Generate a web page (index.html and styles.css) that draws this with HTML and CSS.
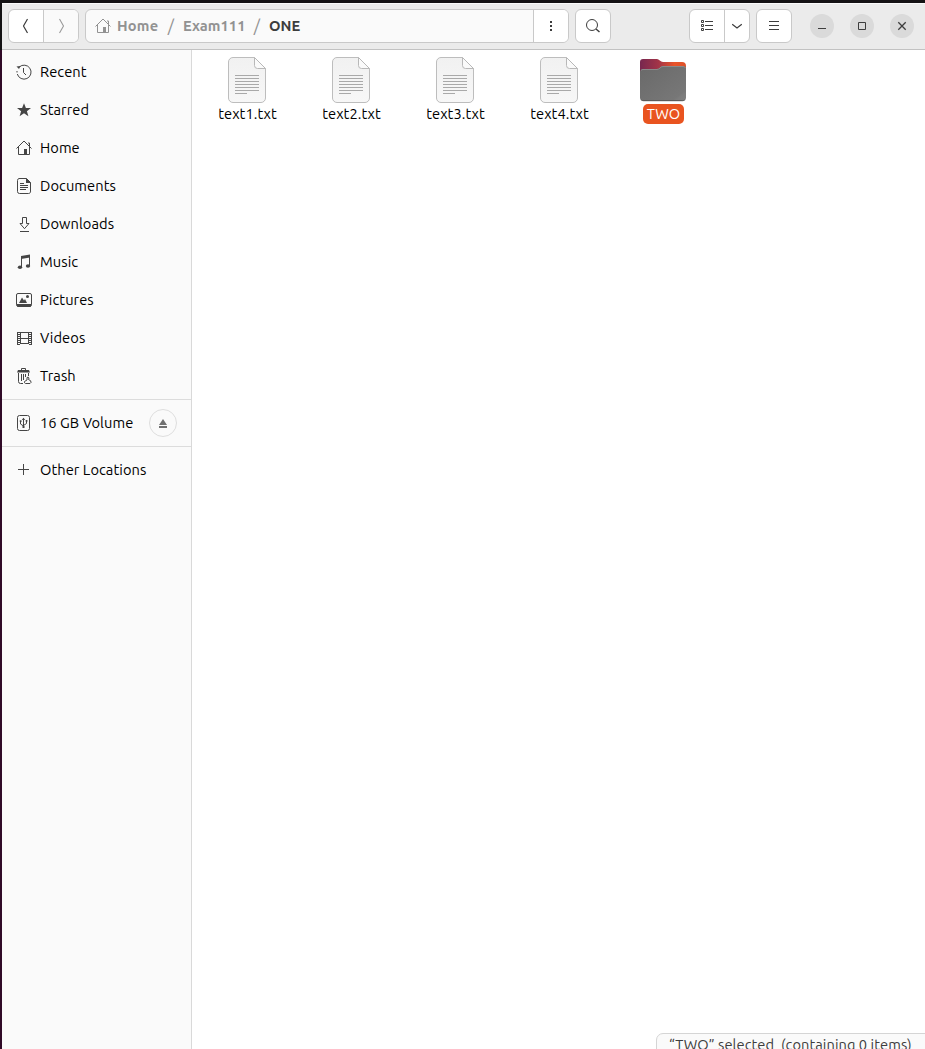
FILE: index.html
```html
<!DOCTYPE html>
<html lang="en">
<head>
<meta charset="utf-8">
<title>ONE</title>
<link rel="stylesheet" href="styles.css">
</head>
<body>
<svg class="defs" width="0" height="0">
  <defs>
    <linearGradient id="paper" x1="0" y1="0" x2="0" y2="1"><stop offset="0" stop-color="#f1f1f1"/><stop offset="1" stop-color="#f7f7f7"/></linearGradient>
    <linearGradient id="tab" x1="0" y1="0" x2="1" y2="0"><stop offset="0" stop-color="#77274f"/><stop offset=".4" stop-color="#a23448"/><stop offset=".75" stop-color="#e95429"/><stop offset="1" stop-color="#dc5129"/></linearGradient>
    <linearGradient id="front" x1="0" y1="0" x2="1" y2="1"><stop offset="0" stop-color="#696969"/><stop offset=".84" stop-color="#777"/><stop offset=".88" stop-color="#7c7c7c"/><stop offset="1" stop-color="#808080"/></linearGradient>
    <symbol id="home" viewBox="0 0 16 16"><path d="M.5 8.500 8 1l7.500 7.500M2.500 7v7.500h6M13.500 7v7.500H11M13.500 6V3H12" fill="none" stroke="currentColor"/><path d="M8 9h3v6H8z" fill="currentColor"/></symbol>
    <symbol id="file" viewBox="0 0 48 48"><path d="M10 1.500H31.500L42.500 12.500V42a4.500 4.500 0 0 1-4.500 4.500H10A4.500 4.500 0 0 1 5.500 42V6A4.500 4.500 0 0 1 10 1.500z" fill="url(#paper)" stroke="#bdbdbd"/><path d="M31.500 1.500v8a3 3 0 0 0 3 3h8z" fill="#fafafa" stroke="#b8b8b8"/><path d="M12 19.500h24M12 22.500h24M12 25.500h24M12 28.500h24M12 31.500h24M12 34.500h24M12 37.500h12" stroke="#a9a9a9"/></symbol>
  </defs>
</svg>
<div class="window">
  <header class="bar">
    <div class="group nav">
      <span class="btn"><svg width="16" height="16"><path d="M9.500 1 5.500 8l4 7" fill="none" stroke="#3d3d3d" stroke-width="1.200"/></svg></span>
      <span class="btn off"><svg width="16" height="16"><path d="M6.500 1l4 7-4 7" fill="none" stroke="#9a9a9a" stroke-width="1.100"/></svg></span>
    </div>
    <div class="group path">
      <div class="crumbs">
        <svg class="crumb-icon" width="16" height="16"><use href="#home"/></svg>
        <b class="c-home">Home</b><i>/</i><b class="c-exam">Exam111</b><i>/</i><b class="current">ONE</b>
      </div>
      <span class="btn"><svg width="16" height="16"><path d="M7 3h2v2H7zM7 7h2v2H7zM7 11h2v2H7z" fill="#3d3d3d"/></svg></span>
    </div>
    <div class="group search">
      <span class="btn"><svg width="16" height="16"><circle cx="7" cy="7" r="5.500" fill="none" stroke="#3d3d3d"/><path d="M11 11l3.500 3" stroke="#3d3d3d" stroke-width="1.500"/></svg></span>
    </div>
    <div class="group view">
      <span class="btn"><svg width="16" height="16"><path d="M2.500 2.500h2v2h-2zM2.500 6.500h2v2h-2zM2.500 10.500h2v2h-2z" fill="none" stroke="#3d3d3d"/><path d="M6 3.500h8M6 7.500h8M6 11.500h8" stroke="#3d3d3d"/></svg></span>
      <span class="btn"><svg width="16" height="16"><path d="M3.200 6.200 8 10l4.800-3.800" fill="none" stroke="#3d3d3d" stroke-width="1.200"/></svg></span>
    </div>
    <div class="group menu">
      <span class="btn"><svg width="16" height="16"><path d="M3 3.500h10M3 7.500h10M3 11.500h10" stroke="#3d3d3d"/></svg></span>
    </div>
    <div class="controls">
      <span class="ctl"><svg width="16" height="16"><path d="M4 10.500h8" stroke="#3d3d3d"/></svg></span>
      <span class="ctl"><svg width="16" height="16"><path d="M4.500 4.500h7v7h-7z" fill="none" stroke="#3d3d3d"/></svg></span>
      <span class="ctl"><svg width="16" height="16"><path d="M4.300 4.300l7.400 7.400M11.700 4.300l-7.400 7.400" stroke="#3d3d3d" stroke-width="1.300"/></svg></span>
    </div>
  </header>
  <div class="body">
    <nav class="side">
      <div class="row"><svg width="16" height="16"><path d="M3.300 3A7 7 0 1 1 1.300 10M1 8.500V7" fill="none" stroke="currentColor"/><path d="M.5 2.500 4.500 2 3 5z" fill="currentColor"/><path d="M7.500 4v4.500l2.500 2.500" fill="none" stroke="currentColor"/></svg><span>Recent</span></div>
      <div class="row"><svg width="16" height="16"><path d="M8 1.200 9.900 6H15l-4.100 3.200 1.500 5.100L8 11.200l-4.400 3.100 1.500-5.100L1 6h5.100z" fill="currentColor"/></svg><span>Starred</span></div>
      <div class="row"><svg width="16" height="16"><use href="#home"/></svg><span>Home</span></div>
      <div class="row"><svg width="16" height="16"><path d="M3 .5h7.500l4 4V13a2 2 0 0 1-2 2.500H3.500a2 2 0 0 1-2-2v-11a2 2 0 0 1 1.500-2z" fill="none" stroke="currentColor"/><path d="M10 0l5 5h-5zM4 5h4v1H4zM4 7h8v1H4zM4 9h8v1H4zM4 11h6v1H4z" fill="currentColor"/></svg><span>Documents</span></div>
      <div class="row"><svg width="16" height="16"><path d="M6.500 1.500h4v6H13l-4.500 5.200L4 7.500h2.500zM4 15.500h9" fill="none" stroke="currentColor"/></svg><span>Downloads</span></div>
      <div class="row"><svg width="16" height="16"><path d="M5.500 13V3.500l8-1.500v9.500" fill="none" stroke="currentColor"/><path d="M5 2l9-1.500v3L5 5z" fill="currentColor"/><ellipse cx="4" cy="13.200" rx="2.200" ry="1.800" fill="currentColor"/><ellipse cx="12" cy="12" rx="2.200" ry="1.800" fill="currentColor"/></svg><span>Music</span></div>
      <div class="row"><svg width="16" height="16"><rect x=".5" y="1.500" width="15" height="12.500" rx="1.500" fill="none" stroke="currentColor"/><path d="M.5 12h15v1.500L14.500 15h-13l-1-1.500zM3 11l3-5.500 2 3L9 7l2 4z" fill="currentColor"/><circle cx="11.500" cy="4.500" r="1.500" fill="currentColor"/></svg><span>Pictures</span></div>
      <div class="row"><svg width="16" height="16"><path d="M4.500 2v12M12.500 2v12M4 2.500h9M4 8.500h9M4 13.500h9" fill="none" stroke="currentColor"/><path d="M1.500 2v13M15.500 2v13" stroke="currentColor"/><path d="M3 2v13M14 2v13" stroke="currentColor" stroke-width="2" stroke-dasharray="1 1"/></svg><span>Videos</span></div>
      <div class="row"><svg width="16" height="16"><path d="M5.500 2V.5h4V2" fill="none" stroke="currentColor"/><path d="M2 2h11l1 2.500H1z" fill="currentColor"/><path d="M2.500 5v8.500a2 2 0 0 0 2 2H7M5.500 6v7M7.500 6v6M9.500 6v3M12.500 5v3" fill="none" stroke="currentColor"/><path d="M11 9.500q1.500-1 2 .500l-.5 1.500q3 1 2.500 3l-1 1H9.500q-1.500-.5-1-2l2.500-1.500z" fill="#fafafa" stroke="currentColor"/></svg><span>Trash</span></div>
      <hr>
      <div class="row"><svg width="16" height="16"><rect x="1.500" y=".5" width="12" height="15" rx="2" fill="none" stroke="currentColor"/><path d="M7.500 3v10M4.500 6v3l3 2M10.500 5.500v3l-3 2" fill="none" stroke="currentColor"/><path d="M5.800 5l1.700-2.300L9.200 5zM6.500 11h2v2h-2zM3.800 5.200h1.700v1.700H3.800zM9.700 5h1.700v1.700H9.700z" fill="currentColor"/></svg><span>16 GB Volume</span><span class="eject"><svg width="16" height="16"><path d="M8 4l4 6H4zM4 11h8v2H4z" fill="#707070"/></svg></span></div>
      <hr>
      <div class="row"><svg width="16" height="16"><path d="M2 7.500h11M7.500 2v11" stroke="currentColor"/></svg><span>Other Locations</span></div>
    </nav>
    <main class="files">
      <div class="item"><svg width="48" height="48"><use href="#file"/></svg><span>text1.txt</span></div>
      <div class="item"><svg width="48" height="48"><use href="#file"/></svg><span>text2.txt</span></div>
      <div class="item"><svg width="48" height="48"><use href="#file"/></svg><span>text3.txt</span></div>
      <div class="item"><svg width="48" height="48"><use href="#file"/></svg><span>text4.txt</span></div>
      <div class="item selected"><svg width="48" height="48"><path d="M4 3h14c2 0 3.500 3 6 3h19a4 4 0 0 1 4 4v12H1V6a3 3 0 0 1 3-3z" fill="url(#tab)"/><path d="M4 13h14c3 0 3-3 6-3h20a3 3 0 0 1 3 3v28.500a3.500 3.500 0 0 1-3.500 3.500h-39A3.500 3.500 0 0 1 1 41.500V16a3 3 0 0 1 3-3z" fill="url(#front)"/><path d="M2 14.500q.8-1 2-1h14c3 0 3-3 6-3h20q2 0 2.500 1.500" fill="none" stroke="#8a8a8a"/><path d="M2.500 44q.8.700 2 .700h39q1.200 0 2-.700" fill="none" stroke="#555"/></svg><span>TWO</span></div>
    </main>
  </div>
  <div class="status">“TWO” selected&nbsp; (containing 0 items)</div>
</div>
</body>
</html>
```
FILE: styles.css
```css
* { box-sizing: border-box; }
html, body { height: 100%; margin: 0; overflow: hidden; }
body { background: linear-gradient(#141214 50px, #300a27 50px); font: 14.667px/20px Ubuntu, "Noto Sans", sans-serif; letter-spacing: .06px; color: #000; padding: 3px 0 0 2px; }
.defs { position: absolute; }
svg { display: block; flex: none; }
.window { display: flex; flex-direction: column; height: 100%; background: #fff; }
.bar { height: 47px; flex: none; display: flex; align-items: flex-start; padding: 5px 0 0 6px; background: #ebebeb; border-top: 1px solid #fafafa; border-bottom: 1px solid #c2c2c2; }
.group { display: flex; height: 34px; border: 1px solid #c9c9c9; border-radius: 6px; background: #fff; overflow: hidden; margin-right: 6px; }
.btn { flex: 1; display: flex; align-items: center; justify-content: center; }
.btn + .btn, .crumbs + .btn { border-left: 1px solid #c9c9c9; }
.off { background: #fafafa; }
.nav { width: 71px; }
.path { width: 484px; background: #fafafa; }
.path .btn { flex: 0 0 35px; background: #fff; }
.search { width: 36px; }
.view { width: 61px; margin-left: 72px; }
.view .btn:last-child { flex: 0 0 25px; }
.menu { width: 36px; }
.crumbs { flex: 1; display: flex; align-items: center; padding-left: 9px; color: #929292; }
.crumb-icon { margin-right: 6px; }
.crumbs b { font-weight: 700; }
.crumbs i { font-style: normal; font-size: 17px; width: 24px; text-align: center; }
.c-home { width: 42px; letter-spacing: .2px; }
.c-exam { width: 62px; }
.crumbs .current { color: #3d3d3d; }
.controls { display: flex; gap: 16px; margin: 5px 0 0 12px; }
.ctl { width: 24px; height: 24px; border-radius: 50%; background: #dadada; display: flex; align-items: center; justify-content: center; }
.body { flex: 1; display: flex; min-height: 0; }
.side { width: 190px; flex: none; padding-top: 3px; background: #fafafa; border-right: 1px solid #d9d9d9; }
.row { height: 38px; display: flex; align-items: center; gap: 8px; padding: 0 14px; }
.row > svg { color: #454545; }
.row > span { white-space: nowrap; }
.side hr { height: 1px; margin: 4px 0; border: 0; background: #dcdcdc; }
.row .eject { width: 28px; height: 28px; border: 1px solid #dedede; border-radius: 50%; margin-left: auto; display: flex; align-items: center; justify-content: center; }
.files { flex: 1; display: flex; align-items: flex-start; padding: 6px 0 0 3px; }
.item { width: 104px; display: flex; flex-direction: column; align-items: center; }
.item svg { margin-right: 1px; }
.item span { height: 20px; margin-left: 1px; padding: 0 4px; border-radius: 5px; white-space: nowrap; }
.selected span { background: #e95420; color: #fff; }
.status { position: absolute; left: 656px; top: 1033px; width: 280px; height: 26px; padding: 1px 0 0 12px; white-space: nowrap; background: #fafafa; border: 1px solid #d5d5d5; border-radius: 7px 0 0 0; color: #3d3d3d; }
```
